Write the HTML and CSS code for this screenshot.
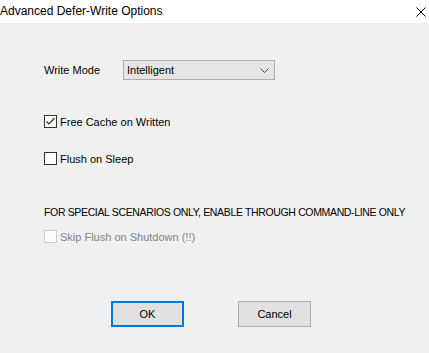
FILE: index.html
```html
<!DOCTYPE html>
<html>
<head>
<meta charset="utf-8">
<link rel="stylesheet" href="styles.css">
</head>
<body>
<div class="window">
  <div class="titlebar">
    <span class="title">Advanced Defer-Write Options</span>
    <svg class="close" width="10" height="10" viewBox="0 0 10 10"><path d="M0.5 0.5L9.5 9.5M9.5 0.5L0.5 9.5" stroke="#000" stroke-width="1"/></svg>
  </div>
  <div class="content">
    <div class="row mode">
      <span class="label">Write Mode</span>
      <div class="combo">
        <span>Intelligent</span>
        <svg width="9" height="5" viewBox="0 0 9 5"><path d="M0.5 0.5L4.5 4.5L8.5 0.5" stroke="#444" fill="none" stroke-width="1"/></svg>
      </div>
    </div>
    <div class="row check c1">
      <span class="box"><svg width="11" height="11" viewBox="0 0 11 11"><path d="M1.5 5.5L4 8L9.5 2" stroke="#333" fill="none" stroke-width="1.2"/></svg></span>
      <span>Free Cache on Written</span>
    </div>
    <div class="row check c2">
      <span class="box"></span>
      <span>Flush on Sleep</span>
    </div>
    <div class="caps">FOR SPECIAL SCENARIOS ONLY, ENABLE THROUGH COMMAND-LINE ONLY</div>
    <div class="row check c3 disabled">
      <span class="box"></span>
      <span>Skip Flush on Shutdown (!!)</span>
    </div>
    <div class="buttons">
      <button class="btn default">OK</button>
      <button class="btn">Cancel</button>
    </div>
  </div>
</div>
</body>
</html>
```
FILE: styles.css
```css
html, body {
  margin: 0;
  padding: 0;
  background: #f0f0f0;
  font-family: "Liberation Sans", Arial, sans-serif;
  font-size: 11px;
  color: #000;
}
.window {
  width: 429px;
  height: 353px;
  overflow: hidden;
}
.titlebar {
  height: 23px;
  background: #fff;
  display: flex;
  align-items: center;
  justify-content: space-between;
  padding: 0 3px 1px 0;
  box-sizing: border-box;
}
.title {
  font-size: 12px;
}
.close {
  margin-top: 1px;
}
.content {
  padding-left: 44px;
}
.row {
  display: flex;
  align-items: center;
}
.mode {
  margin-top: 37px;
  height: 20px;
}
.label {
  width: 79px;
}
.combo {
  width: 152px;
  height: 20px;
  box-sizing: border-box;
  border: 1px solid #adadad;
  background: #e5e5e5;
  display: flex;
  align-items: center;
  justify-content: space-between;
  padding: 0 5px 0 3px;
}
.check {
  height: 13px;
  gap: 3px;
}
.c1 { margin-top: 35px; }
.c2 { margin-top: 24px; }
.box {
  width: 13px;
  height: 13px;
  box-sizing: border-box;
  border: 1px solid #333;
  background: #fff;
  display: flex;
  align-items: center;
  justify-content: center;
}
.caps {
  margin-top: 40px;
  height: 14px;
  line-height: 14px;
  font-size: 10.5px;
  letter-spacing: -0.35px;
  white-space: nowrap;
}
.c3 { margin-top: 11px; }
.disabled { color: #838383; }
.disabled .box {
  border-color: #cccccc;
  background: #fcfcfc;
}
.buttons {
  margin-top: 58px;
  margin-left: 67px;
  display: flex;
  gap: 54px;
}
.btn {
  width: 73px;
  height: 26px;
  box-sizing: border-box;
  border: 1px solid #adadad;
  background: #e1e1e1;
  font-family: "Liberation Sans", Arial, sans-serif;
  font-size: 11px;
  color: #000;
  padding: 0;
}
.btn.default {
  border: 2px solid #0078d7;
}
```
